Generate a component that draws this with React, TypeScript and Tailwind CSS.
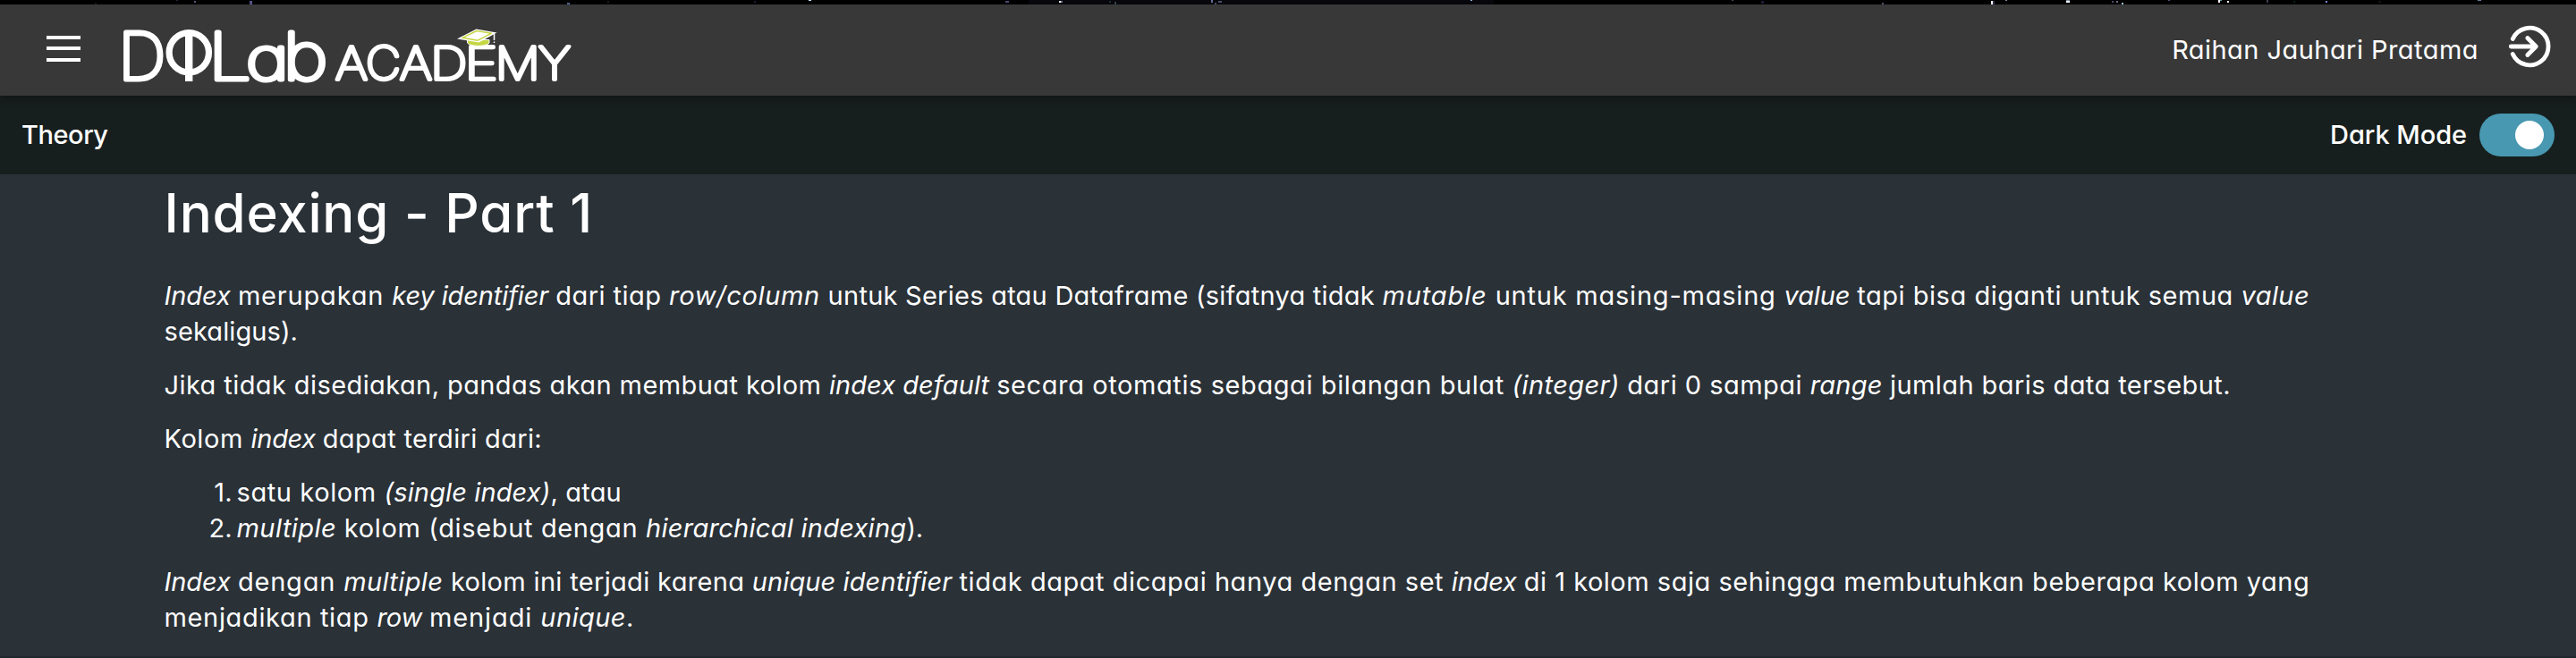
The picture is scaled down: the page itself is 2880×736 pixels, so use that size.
import type { ReactNode } from "react";

const stars: [number, number, number, number, string][] = [
  [106, 3, 2, 2, "#101c20"],
  [197, 0, 2, 1, "#23233a"],
  [217, 1, 2, 2, "#5a5a7c"],
  [279, 1, 3, 4, "#55558a"],
  [634, 3, 3, 2, "#53699a"],
  [679, 1, 2, 2, "#1b1b28"],
  [843, 1, 2, 2, "#18203a"],
  [904, 0, 3, 1, "#cfe6f5"],
  [1124, 1, 4, 2, "#4a4a78"],
  [1184, 1, 2, 2, "#ffffff"],
  [1186, 1, 2, 2, "#6f7599"],
  [1240, 1, 2, 2, "#1d3038"],
  [1246, 2, 2, 3, "#33404a"],
  [1354, 0, 2, 3, "#66709c"],
  [1358, 3, 2, 2, "#46506c"],
  [1362, 1, 4, 2, "#4c5170"],
  [1644, 0, 2, 1, "#8fb4e8"],
  [1936, 0, 2, 1, "#4a4a60"],
  [1969, 1, 3, 3, "#1c1c38"],
  [2104, 3, 2, 2, "#55556e"],
  [2226, 1, 2, 4, "#ffffff"],
  [2228, 1, 2, 4, "#33334c"],
  [2242, 0, 2, 1, "#8a8aa0"],
  [2310, 0, 4, 1, "#7d93a8"],
  [2310, 1, 4, 2, "#ffffff"],
  [2361, 1, 2, 2, "#4c4c66"],
  [2366, 1, 2, 2, "#6a6a84"],
  [2372, 3, 2, 2, "#a8d0e6"],
  [2424, 0, 2, 1, "#55557a"],
  [2480, 0, 2, 3, "#ffffff"],
  [2482, 0, 2, 1, "#5f9fb4"],
  [2490, 1, 2, 2, "#ffffff"],
  [2534, 0, 2, 3, "#3f3f58"],
  [2564, 1, 2, 2, "#0e2020"],
  [2600, 1, 2, 2, "#7a86d8"],
  [2659, 1, 3, 2, "#12141c"],
  [2770, 0, 4, 1, "#6c7c9c"],
];

function StarStrip() {
  return (
    <svg className="block h-[5px] w-full bg-black" viewBox="0 0 2880 5" preserveAspectRatio="none" shapeRendering="crispEdges">
      <rect x="1150" y="0" width="520" height="5" fill="#07070c" />
      {stars.map(([x, y, w, h, c], i) => (
        <rect key={i} x={x} y={y} width={w} height={h} fill={c} />
      ))}
    </svg>
  );
}

function Logo() {
  return (
    <svg className="block h-[94px] w-[520px] font-['Inter'] [font-feature-settings:'cv11']" viewBox="128 10 520 94">
      <g fill="#fff" stroke="#fff" strokeLinejoin="round" strokeLinecap="round">
        <g fontSize="72.5" fontWeight="100" strokeWidth="5">
          <text x="132.3" y="88.5" textLength="53" lengthAdjust="spacingAndGlyphs">D</text>
          <text x="233" y="88.5" textLength="48" lengthAdjust="spacingAndGlyphs">L</text>
          <text x="275" y="88.5" fontSize="66" textLength="48" lengthAdjust="spacingAndGlyphs">a</text>
          <text x="316.5" y="88.5" textLength="50" lengthAdjust="spacingAndGlyphs">b</text>
        </g>
        <g fontSize="51" fontWeight="100" strokeWidth="4.2">
          <text x="375" y="88.9" textLength="36" lengthAdjust="spacingAndGlyphs">A</text>
          <text x="409" y="88.9" textLength="39" lengthAdjust="spacingAndGlyphs">C</text>
          <text x="447" y="88.9" textLength="36" lengthAdjust="spacingAndGlyphs">A</text>
          <text x="481.2" y="88.9" textLength="41" lengthAdjust="spacingAndGlyphs">D</text>
          <text x="519.6" y="88.9" textLength="37" lengthAdjust="spacingAndGlyphs">E</text>
          <text x="553.8" y="88.9" textLength="50" lengthAdjust="spacingAndGlyphs">M</text>
          <text x="602" y="88.9" textLength="36" lengthAdjust="spacingAndGlyphs">Y</text>
        </g>
      </g>
      <ellipse cx="211.3" cy="58.8" rx="22.2" ry="22.2" fill="none" stroke="#fff" strokeWidth="7.2" />
      <rect x="207" y="37" width="8.4" height="54" fill="#fff" />
      <path d="M522.5 44.5h24.500v3.500c-2.500 4.500-22 4.500-24.500 0z" fill="#c5d645" stroke="#fff" strokeWidth="1" />
      <path d="M511 43.500l21.500-11 23 4-20 11z" fill="#fff" />
      <path d="M517 42.300l15.800-7.800 16.400 2.800-15 7.900z" fill="#fff" stroke="#c5d645" strokeWidth="1.500" strokeLinejoin="round" />
      <path d="M552.500 38v7M552.500 46.500v1.500" fill="none" stroke="#fff" strokeWidth="1.500" />
    </svg>
  );
}

function ExitIcon() {
  return (
    <svg className="block h-[48px] w-[48px]" viewBox="0 0 48 48" fill="none" stroke="#fff" strokeWidth="4.8" strokeLinecap="round" strokeLinejoin="round">
      <path d="M5.300 15.500A20.800 20.800 0 1 1 5.300 32.500" />
      <path d="M3.300 24H31M21.800 14.500l9.500 9.500l-9.500 9.500" />
    </svg>
  );
}

function T({ c, children }: { c: string; children: ReactNode }) {
  return <span className={c}>{children}</span>;
}

function I({ c, children }: { c: string; children: ReactNode }) {
  return <em className={c}>{children}</em>;
}

export default function App() {
  return (
    <div className="flex h-[736px] w-full flex-col overflow-hidden bg-[#2a3137] font-['Inter','Noto_Sans',sans-serif] text-[29px] leading-[40px] text-white [font-feature-settings:'cv11']">
      <StarStrip />

      <header className="relative z-10 flex h-[102px] shrink-0 items-center bg-[#383838] pr-[28px] pl-[52px] shadow-[0_4px_10px_rgba(0,0,0,0.35)]">
        <button aria-label="Menu" className="mt-[-4px] flex w-[38px] flex-col gap-[8.500px]">
          <span className="h-1 bg-white" />
          <span className="h-1 bg-white" />
          <span className="h-1 bg-white" />
        </button>
        <div className="mt-[2px] ml-[38px]">
          <Logo />
        </div>
        <span className="ml-auto tracking-[0.45px]">Raihan Jauhari Pratama</span>
        <button aria-label="Exit" className="mt-[-8px] ml-[33px]">
          <ExitIcon />
        </button>
      </header>

      <div className="flex h-[88px] shrink-0 items-center justify-between bg-[#171f1e] pr-[24px] pl-[24px] font-medium">
        <span className="tracking-[-0.45px]">Theory</span>
        <div className="flex items-center gap-[14px]">
          <span className="tracking-[-0.05px]">Dark Mode</span>
          <span role="switch" aria-checked="true" className="flex h-12 w-[84px] items-center justify-end rounded-full bg-[#4898b1] pr-3">
            <span className="size-8 rounded-full bg-white" />
          </span>
        </div>
      </div>

      <main className="flex grow flex-col gap-5 border-b-2 border-[#20272b] pt-[8px] pl-[183.5px] whitespace-pre">
        <h1 className="mb-[18px] text-[60px] leading-[70px] font-medium tracking-[0.8px]">Indexing - Part 1</h1>

        <p>
          <I c="tracking-[-0.06px]">{"Index "}</I>
          <T c="tracking-[0.82px]">{"merupakan "}</T>
          <I c="tracking-[-0.12px]">{"key identifier "}</I>
          <T c="tracking-[0.46px]">{"dari tiap "}</T>
          <I c="tracking-[0.65px]">{"row/column "}</I>
          <T c="tracking-[0.25px]">{"untuk Series atau Dataframe (sifatnya tidak "}</T>
          <I c="tracking-[0.87px]">{"mutable "}</I>
          <T c="tracking-[0.78px]">{"untuk masing-masing "}</T>
          <I c="tracking-[-0.14px]">{"value "}</I>
          <T c="tracking-[0.52px]">{"tapi bisa diganti untuk semua "}</T>
          <I c="tracking-[0.4px]">value</I>
          <br />
          <T c="tracking-[0.1px]">sekaligus).</T>
        </p>

        <p>
          <T c="tracking-[0.41px]">{"Jika tidak disediakan, pandas akan membuat kolom "}</T>
          <I c="tracking-[0.05px]">{"index default "}</I>
          <T c="tracking-[0.59px]">{"secara otomatis sebagai bilangan bulat "}</T>
          <I c="tracking-[0.4px]">{"(integer) "}</I>
          <T c="tracking-[0.47px]">{"dari 0 sampai "}</T>
          <I c="tracking-[0.22px]">{"range "}</I>
          <T c="tracking-[0.42px]">jumlah baris data tersebut.</T>
        </p>

        <p>
          <T c="tracking-[0.56px]">{"Kolom "}</T>
          <I c="tracking-[-0.3px]">{"index "}</I>
          <T c="tracking-[0.34px]">dapat terdiri dari:</T>
        </p>

        <ol>
          <li className="flex">
            <span className="w-[81px] pr-[5px] text-right">1.</span>
            <span>
              <T c="tracking-[0.6px]">{"satu kolom "}</T>
              <I c="tracking-[0.12px]">(single index)</I>
              <T c="tracking-[0.2px]">, atau</T>
            </span>
          </li>
          <li className="flex">
            <span className="w-[81px] pr-[5px] text-right">2.</span>
            <span>
              <I c="tracking-[0.46px]">{"multiple "}</I>
              <T c="tracking-[0.64px]">{"kolom (disebut dengan "}</T>
              <I c="tracking-[0.27px]">hierarchical indexing</I>
              <T c="tracking-[-0.3px]">).</T>
            </span>
          </li>
        </ol>

        <p>
          <I c="tracking-[-0.06px]">{"Index "}</I>
          <T c="tracking-[0.8px]">{"dengan "}</T>
          <I c="tracking-[0.4px]">{"multiple "}</I>
          <T c="tracking-[0.33px]">{"kolom ini terjadi karena "}</T>
          <I c="tracking-[0.1px]">{"unique identifier "}</I>
          <T c="tracking-[0.54px]">{"tidak dapat dicapai hanya dengan set "}</T>
          <I c="tracking-[-0.2px]">{"index "}</I>
          <T c="tracking-[0.52px]">di 1 kolom saja sehingga membutuhkan beberapa kolom yang</T>
          <br />
          <T c="tracking-[0.65px]">{"menjadikan tiap "}</T>
          <I c="tracking-[-0.18px]">{"row "}</I>
          <T c="tracking-[0.9px]">{"menjadi "}</T>
          <I c="tracking-[0.45px]">unique</I>
          <T c="tracking-normal">.</T>
        </p>
      </main>
    </div>
  );
}
